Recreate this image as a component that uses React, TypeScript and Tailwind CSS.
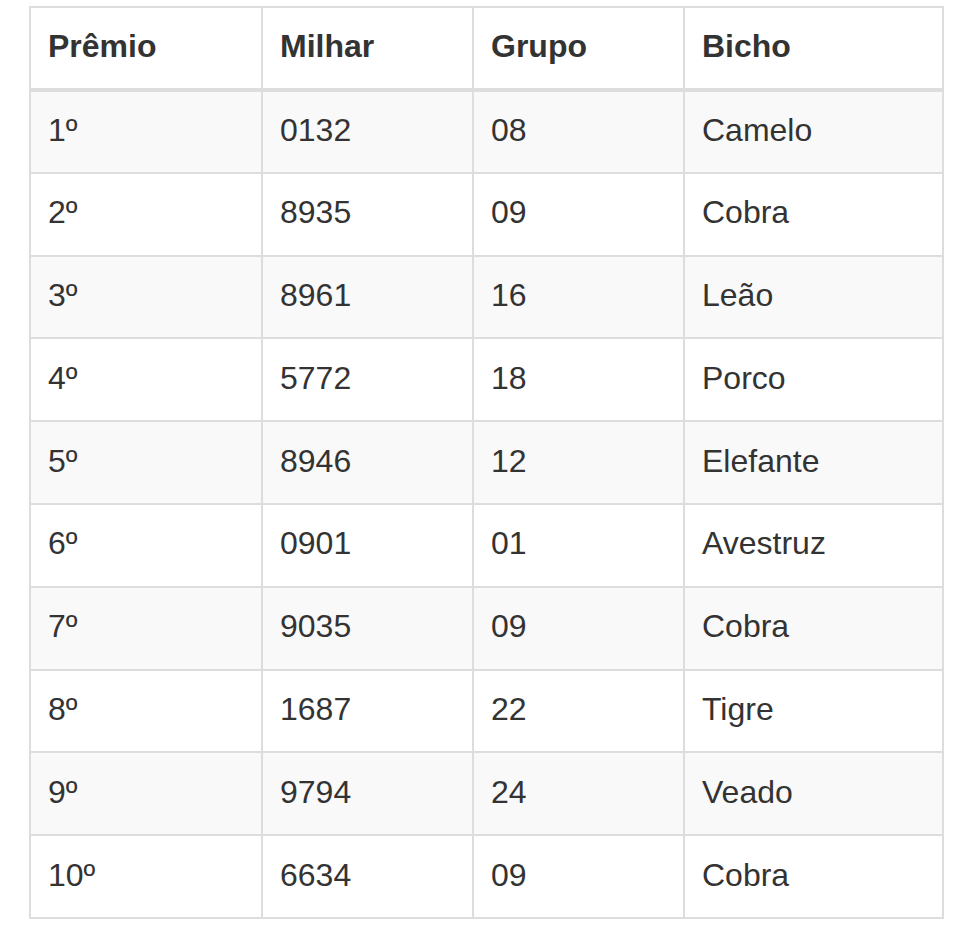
import React from "react";

const rows: [string, string, string, string][] = [
  ["1º", "0132", "08", "Camelo"],
  ["2º", "8935", "09", "Cobra"],
  ["3º", "8961", "16", "Leão"],
  ["4º", "5772", "18", "Porco"],
  ["5º", "8946", "12", "Elefante"],
  ["6º", "0901", "01", "Avestruz"],
  ["7º", "9035", "09", "Cobra"],
  ["8º", "1687", "22", "Tigre"],
  ["9º", "9794", "24", "Veado"],
  ["10º", "6634", "09", "Cobra"],
];

export default function App() {
  return (
    <div
      className="bg-white w-[966px] h-[939px] pl-[29px] pt-[6px] text-[#333]"
      style={{ fontFamily: '"Liberation Sans", Arial, sans-serif' }}
    >
      <table className="w-[913px] table-fixed border-collapse border-2 border-[#dddddd] text-[32px] leading-[46px]">
        <colgroup>
          <col className="w-[232px]" />
          <col className="w-[211px]" />
          <col className="w-[211px]" />
          <col className="w-[259px]" />
        </colgroup>
        <thead>
          <tr className="h-[83px]">
            {["Prêmio", "Milhar", "Grupo", "Bicho"].map((h) => (
              <th
                key={h}
                className="text-left font-bold pl-[17px] pr-[17px] pt-0 pb-[5px] border-2 border-b-4 border-[#dddddd] align-middle"
              >
                {h}
              </th>
            ))}
          </tr>
        </thead>
        <tbody>
          {rows.map((r, i) => (
            <tr
              key={i}
              className={`h-[82.8px] ${i % 2 === 0 ? "bg-[#f9f9f9]" : "bg-white"}`}
            >
              {r.map((c, j) => (
                <td
                  key={j}
                  className="pl-[17px] pr-[17px] pt-0 pb-[4px] border-2 border-[#dddddd] align-middle"
                >
                  {c}
                </td>
              ))}
            </tr>
          ))}
        </tbody>
      </table>
    </div>
  );
}
